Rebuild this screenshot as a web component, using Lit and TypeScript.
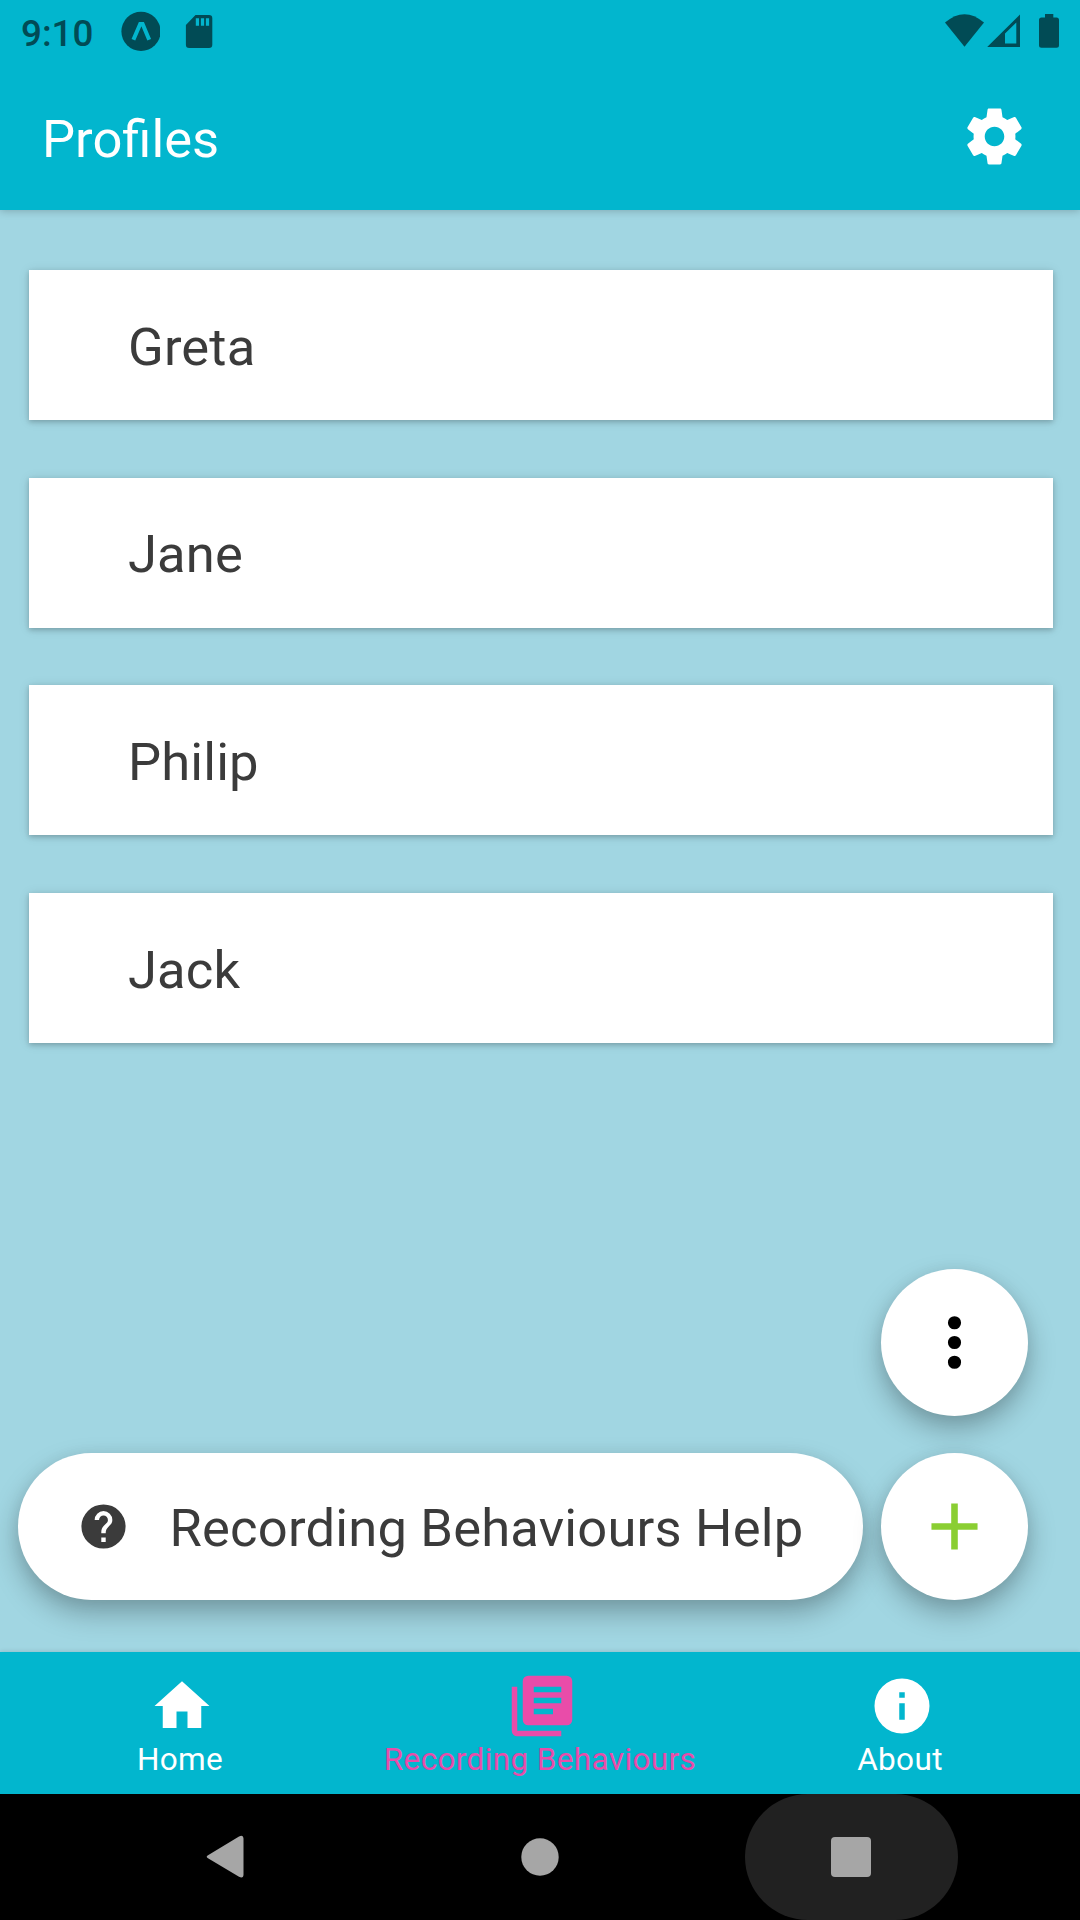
import { LitElement, html, css, svg } from "lit";
import { customElement, state } from "lit/decorators.js";
import { classMap } from "lit/directives/class-map.js";

const GEAR =
  "M19.43 12.98c.04-.32.07-.64.07-.98s-.03-.66-.07-.98l2.11-1.65c.19-.15.24-.42.12-.64l-2-3.46c-.12-.22-.39-.3-.61-.22l-2.49 1c-.52-.4-1.08-.73-1.69-.98l-.38-2.65C14.46 2.18 14.25 2 14 2h-4c-.25 0-.46.18-.49.42l-.38 2.65c-.61.25-1.17.59-1.69.98l-2.49-1c-.23-.09-.49 0-.61.22l-2 3.46c-.13.22-.07.49.12.64l2.11 1.65c-.04.32-.07.65-.07.98s.03.66.07.98l-2.11 1.65c-.19.15-.24.42-.12.64l2 3.46c.12.22.39.3.61.22l2.49-1c.52.4 1.08.73 1.69.98l.38 2.65c.03.24.24.42.49.42h4c.25 0 .46-.18.49-.42l.38-2.65c.61-.25 1.17-.59 1.69-.98l2.49 1c.23.09.49 0 .61-.22l2-3.46c.12-.22.07-.49-.12-.64l-2.11-1.65zM12 15.5c-1.93 0-3.5-1.57-3.5-3.5s1.57-3.5 3.5-3.5 3.5 1.57 3.5 3.5-1.57 3.5-3.5 3.5z";
const HELP =
  "M12 2a10 10 0 1 0 0 20 10 10 0 0 0 0-20zm1 17h-2v-2h2zm2.07-7.75l-.9.92C13.45 12.89 13 13.5 13 15h-2v-.5c0-1.11.45-2.11 1.17-2.83l1.24-1.26c.37-.36.59-.86.59-1.41a2 2 0 1 0-4 0H8a4 4 0 1 1 8 0c0 .88-.36 1.67-.93 2.25z";
const DOTS =
  "M12 16a2 2 0 1 1 0 4 2 2 0 0 1 0-4m0-6a2 2 0 1 1 0 4 2 2 0 0 1 0-4m0-6a2 2 0 1 1 0 4 2 2 0 0 1 0-4z";
const PLUS = "M19 13h-6v6h-2v-6H5v-2h6V5h2v6h6v2z";
const HOME = "M10 20v-6h4v6h5v-8h3L12 3 2 12h3v8z";
const LIBRARY =
  "M21 1H7a2 2 0 0 0-2 2v14a2 2 0 0 0 2 2h14a2 2 0 0 0 2-2V3a2 2 0 0 0-2-2zM19 7H9V5h10zm0 4H9V9h10zm-3 4H9v-2h7zM3 5H1v16a2 2 0 0 0 2 2h16v-2H3z";
const INFO =
  "M12 2a10 10 0 1 0 0 20 10 10 0 0 0 0-20zm1 15h-2v-6h2zm0-8h-2V7h2z";

const glyph = (path: string) =>
  html`<svg viewBox="0 0 24 24" aria-hidden="true">${svg`<path fill="currentColor" fill-rule="evenodd" d=${path}></path>`}</svg>`;

@customElement("status-bar")
export class StatusBar extends LitElement {
  static styles = css`
    :host {
      display: flex;
      align-items: center;
      justify-content: space-between;
      height: 63px;
      padding: 0 21px 0 21px;
      color: #014b55;
      box-sizing: border-box;
    }
    .group { display: flex; align-items: center; }
    .clock {
      font-size: 36.75px;
      font-weight: 500;
      line-height: 42px;
      width: 100px;
      padding-top: 5px;
    }
    svg { display: block; }
  `;
  render() {
    return html`
      <div class="group">
        <span class="clock">9:10</span>
        <svg width="39" height="63" viewBox="121 0 39 63">
          <circle cx="141" cy="31.4" r="19.6" fill="currentColor"></circle>
          <path d="M133.4 39.8 140.2 23.9h2.4L149.2 39.8" fill="none" stroke="#02b6ce" stroke-width="4"></path>
        </svg>
        <svg width="53" height="63" viewBox="160 0 53 63">
          <path fill="currentColor" fill-rule="evenodd" d="M195.5 15h13.5a3.3 3.3 0 0 1 3.3 3.3v26.4a3.3 3.3 0 0 1-3.3 3.3h-19.8a3.3 3.3 0 0 1-3.3-3.3V25zM195.8 18.3v7.4h3.2v-7.4zM200.9 18.3v7.4h3.2v-7.4zM205.9 18.3v7.4h3.2v-7.4z"></path>
        </svg>
      </div>
      <svg width="114" height="63" viewBox="945 0 114 63" fill="currentColor">
        <path d="M945 22.6Q964.500 5.700 984 22.6L964.500 46.800z"></path>
        <path fill-rule="evenodd" d="M987.200 47 1020 14.400V47zM1005 43.500h11.300V22.500L1005 33.500z"></path>
        <path d="M1045 14h8.300v3.500h3.200a2.500 2.500 0 0 1 2.500 2.500v25.300a2.500 2.500 0 0 1-2.500 2.500h-15a2.500 2.500 0 0 1-2.500-2.500V20a2.500 2.500 0 0 1 2.500-2.500h3.500z"></path>
      </svg>
    `;
  }
}

@customElement("profile-card")
export class ProfileCard extends LitElement {
  static styles = css`
    :host {
      display: flex;
      align-items: center;
      height: 150px;
      padding: 3px 0 0 99px;
      box-sizing: border-box;
      background: #fff;
      color: #3b3b3b;
      font-size: 52.5px;
      letter-spacing: 0.15px;
      box-shadow: 0 2px 5px rgba(0, 0, 0, 0.2), 0 1px 11px rgba(0, 0, 0, 0.1);
    }
  `;
  render() {
    return html`<slot></slot>`;
  }
}

interface Tab {
  label: string;
  path: string;
}

@customElement("tab-bar")
export class TabBar extends LitElement {
  static styles = css`
    :host {
      display: grid;
      grid-template-columns: repeat(3, 1fr);
      height: 142px;
      background: #02b6ce;
      box-shadow: 0 -1px 4px rgba(0, 0, 0, 0.1);
      position: relative;
    }
    .tab {
      display: flex;
      flex-direction: column;
      align-items: center;
      padding-top: 21px;
      color: #fff;
      font-size: 31.5px;
      line-height: 41px;
      letter-spacing: 0.37px;
      white-space: nowrap;
    }
    .active { color: #e94ca9; }
    .icon { width: 66px; height: 66px; margin-left: 4px; }
    .icon svg { display: block; width: 66px; height: 66px; }
  `;
  @state() private current = 1;
  private tabs: Tab[] = [
    { label: "Home", path: HOME },
    { label: "Recording Behaviours", path: LIBRARY },
    { label: "About", path: INFO },
  ];
  render() {
    return this.tabs.map(
      (t, i) => html`
        <div class=${classMap({ tab: true, active: i === this.current })} @click=${() => (this.current = i)}>
          <span class="icon">${glyph(t.path)}</span>
          <span class="label">${t.label}</span>
        </div>
      `
    );
  }
}

@customElement("system-nav")
export class SystemNav extends LitElement {
  static styles = css`
    :host {
      display: flex;
      justify-content: space-between;
      height: 126px;
      padding: 0 122.500px 0 122px;
      background: #000;
      color: #a6a6a6;
    }
    .key {
      display: flex;
      align-items: center;
      justify-content: center;
      width: 212.500px;
      border-radius: 63px;
    }
    .pressed { background: #212121; }
    svg { display: block; }
  `;
  render() {
    return html`
      <div class="key">
        <svg width="44" height="44" viewBox="0 0 44 44">
          <path fill="currentColor" d="M2 20.200 33 1.500Q37.500-.5 37.500 3.500V39.500Q37.500 43.800 33 41.800L2 23.200Q-.6 21.700 2 20.200z"></path>
        </svg>
      </div>
      <div class="key">
        <svg width="38" height="38" viewBox="0 0 38 38"><circle cx="19" cy="19" r="18.700" fill="currentColor"></circle></svg>
      </div>
      <div class="key pressed">
        <svg width="40" height="40" viewBox="0 0 40 40"><rect width="40" height="40" rx="4" fill="currentColor"></rect></svg>
      </div>
    `;
  }
}

@customElement("app-root")
export class AppRoot extends LitElement {
  static styles = css`
    :host {
      display: flex;
      flex-direction: column;
      width: 1080px;
      height: 1920px;
      overflow: hidden;
      background: #a1d6e2;
      font-family: Roboto, "Liberation Sans", sans-serif;
    }
    .top {
      height: 210px;
      flex: none;
      background: #02b6ce;
      box-shadow: 0 1px 8px rgba(0, 0, 0, 0.22);
    }
    .bar {
      display: flex;
      align-items: center;
      justify-content: space-between;
      height: 147px;
      padding: 0 52.500px 0 42px;
      box-sizing: border-box;
      color: #fff;
    }
    .title { font-size: 52.5px; line-height: 62px; padding-top: 4px; }
    .settings svg { display: block; width: 67px; height: 67px; }
    .content {
      flex: 1;
      min-height: 0;
      display: flex;
      flex-direction: column;
      justify-content: space-between;
      padding: 60px 0 52px;
      box-sizing: border-box;
    }
    .list {
      display: flex;
      flex-direction: column;
      gap: 57.700px;
      padding: 0 27px 0 29px;
    }
    .actions {
      display: flex;
      flex-direction: column;
      align-items: flex-end;
      gap: 37px;
      padding: 0 52px 0 18px;
    }
    .row { display: flex; gap: 18px; width: 100%; }
    .fab, .help {
      display: flex;
      align-items: center;
      height: 147px;
      border-radius: 74px;
      background: #fff;
      box-shadow: 0 13px 28px rgba(0, 0, 0, 0.27), 0 2px 16px rgba(0, 0, 0, 0.06);
    }
    .fab { width: 147px; flex: none; justify-content: center; color: #000; }
    .fab svg { width: 79px; height: 79px; }
    .add { color: #8ace32; }
    .help {
      flex: 1;
      gap: 39.500px;
      padding-left: 59px;
      box-sizing: border-box;
      color: #3b3b3b;
      font-size: 52.5px;
      letter-spacing: 0.2px;
      white-space: nowrap;
    }
    .help svg { width: 53px; height: 53px; flex: none; }
    .caption { padding-top: 3px; }
  `;
  private profiles = ["Greta", "Jane", "Philip", "Jack"];
  render() {
    return html`
      <header class="top">
        <status-bar></status-bar>
        <div class="bar">
          <span class="title">Profiles</span>
          <span class="settings">${glyph(GEAR)}</span>
        </div>
      </header>
      <main class="content">
        <div class="list">
          ${this.profiles.map((name) => html`<profile-card>${name}</profile-card>`)}
        </div>
        <div class="actions">
          <div class="fab">${glyph(DOTS)}</div>
          <div class="row">
            <div class="help">${glyph(HELP)}<span class="caption">Recording Behaviours Help</span></div>
            <div class="fab add">${glyph(PLUS)}</div>
          </div>
        </div>
      </main>
      <tab-bar></tab-bar>
      <system-nav></system-nav>
    `;
  }
}
